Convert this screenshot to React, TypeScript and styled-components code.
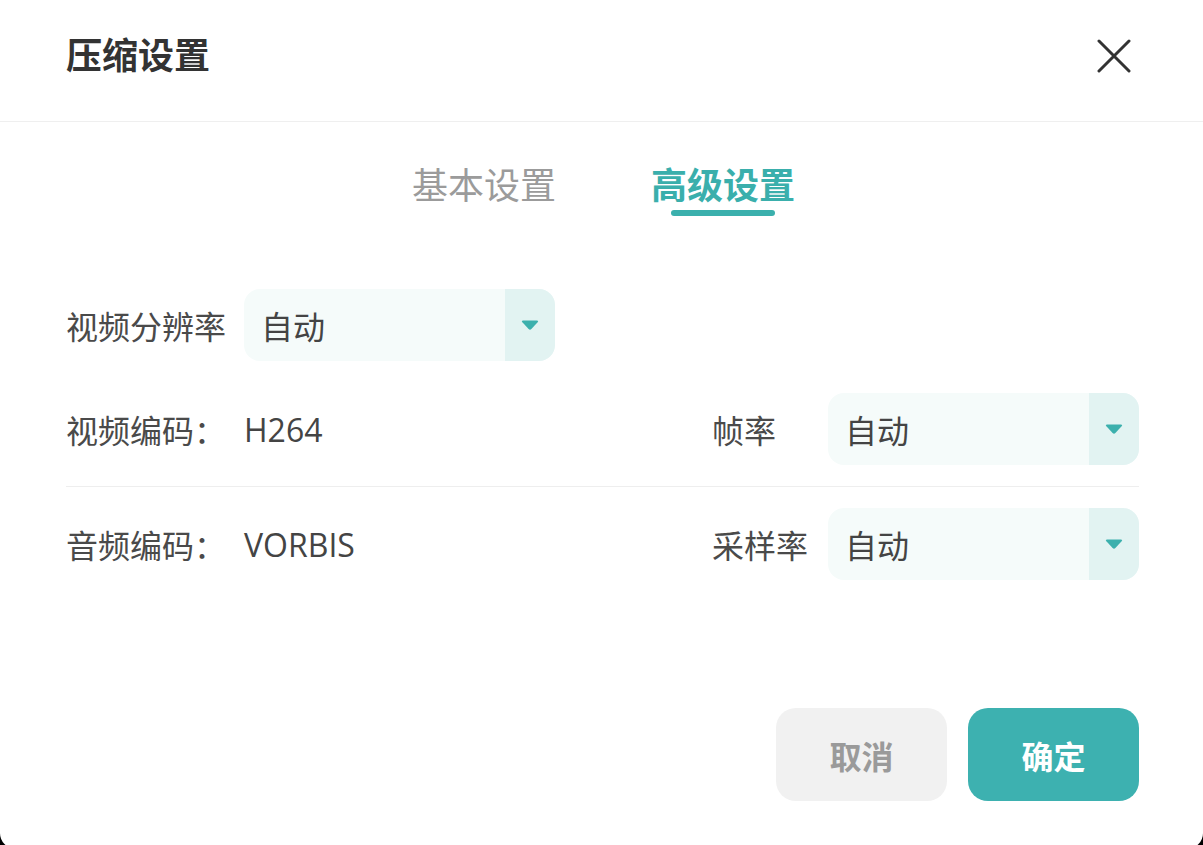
import React, { useState } from "react";
import styled, { createGlobalStyle } from "styled-components";

const Global = createGlobalStyle`
  html, body { margin: 0; padding: 0; background: #000; }
  body { font-family: "Noto Sans", "Noto Sans CJK SC", sans-serif; }
  #root { width: 1203px; height: 845px; overflow: hidden; }
`;

const Dialog = styled.div`
  width: 1203px;
  height: 849px;
  background: #fff;
  border-radius: 0 0 16px 16px;
  display: flex;
  flex-direction: column;
  box-sizing: border-box;
`;

const Header = styled.div`
  height: 122px;
  box-sizing: border-box;
  border-bottom: 1px solid #efefef;
  display: flex;
  align-items: center;
  justify-content: space-between;
  padding: 0 72px 9px 66px;
`;

const Title = styled.h1`
  margin: 0;
  font-size: 36px;
  line-height: 44px;
  font-weight: 700;
  color: #333;
`;

const CloseButton = styled.button`
  border: 0;
  padding: 0;
  background: transparent;
  width: 34px;
  height: 34px;
  display: flex;
  cursor: pointer;
`;

const Tabs = styled.div`
  display: flex;
  justify-content: center;
  gap: 95px;
  margin-top: 42px;
  padding-left: 4px;
`;

const Tab = styled.div<{ $active?: boolean }>`
  display: flex;
  flex-direction: column;
  align-items: center;
  font-size: 36px;
  line-height: 44px;
  font-weight: ${(p) => (p.$active ? 700 : 400)};
  color: ${(p) => (p.$active ? "#3aafac" : "#9b9b9b")};
  cursor: pointer;
`;

const Underline = styled.span<{ $active?: boolean }>`
  display: block;
  width: 104px;
  height: 6px;
  margin-top: 2px;
  border-radius: 3px;
  background: ${(p) => (p.$active ? "#3bb0ad" : "transparent")};
`;

const Form = styled.div`
  display: flex;
  flex-direction: column;
  margin-top: 73px;
  padding: 0 64px 0 66px;
`;

const Row = styled.div<{ $gap?: number }>`
  display: flex;
  align-items: center;
  height: 72px;
  margin-top: ${(p) => p.$gap ?? 0}px;
`;

const Label = styled.span<{ $width: number }>`
  width: ${(p) => p.$width}px;
  flex: none;
  font-size: 32px;
  color: #4a4a4a;
  white-space: nowrap;
`;

const Value = styled.span`
  font-family: "Open Sans", "Noto Sans CJK SC", sans-serif;
  font-size: 32px;
  color: #444;
`;

const RightGroup = styled.div`
  margin-left: auto;
  display: flex;
  align-items: center;
`;

const Divider = styled.div`
  height: 1px;
  background: #eeeeee;
  margin-top: 21px;
`;

const Select = styled.div`
  width: 311px;
  height: 72px;
  border-radius: 16px;
  overflow: hidden;
  background: #f5fbfa;
  display: flex;
  align-items: center;
  cursor: pointer;
`;

const SelectText = styled.span`
  flex: 1;
  padding-left: 17px;
  font-size: 32px;
  color: #444;
`;

const ArrowBox = styled.span`
  width: 50px;
  height: 100%;
  background: #e2f3f2;
  display: flex;
  align-items: center;
  justify-content: center;
`;

const Footer = styled.div`
  display: flex;
  justify-content: flex-end;
  gap: 21px;
  margin-top: 128px;
  padding-right: 64px;
`;

const Button = styled.button<{ $primary?: boolean }>`
  width: 171px;
  height: 93px;
  border: 0;
  border-radius: 20px;
  font-family: inherit;
  font-size: 32px;
  font-weight: 700;
  background: ${(p) => (p.$primary ? "#3db1b0" : "#f1f1f1")};
  color: ${(p) => (p.$primary ? "#fff" : "#9a9a9a")};
  cursor: pointer;
`;

const Caret = () => (
  <svg width="20" height="12" viewBox="0 0 20 12">
    <path d="M3 1.5 H17 Q19 1.5 17.6 3.2 L11.4 10 Q10 11.4 8.6 10 L2.4 3.2 Q1 1.5 3 1.5 Z" fill="#3cb0ad" />
  </svg>
);

const Dropdown = ({ value }: { value: string }) => (
  <Select>
    <SelectText>{value}</SelectText>
    <ArrowBox>
      <Caret />
    </ArrowBox>
  </Select>
);

export default function App() {
  const [tab, setTab] = useState(1);
  return (
    <>
      <Global />
      <Dialog>
        <Header>
          <Title>压缩设置</Title>
          <CloseButton aria-label="关闭">
            <svg width="34" height="34" viewBox="0 0 34 34">
              <path d="M2 2 L32 32 M32 2 L2 32" stroke="#333" strokeWidth="3" strokeLinecap="round" />
            </svg>
          </CloseButton>
        </Header>
        <Tabs>
          {["基本设置", "高级设置"].map((t, i) => (
            <Tab key={t} $active={tab === i} onClick={() => setTab(i)}>
              {t}
              <Underline $active={tab === i} />
            </Tab>
          ))}
        </Tabs>
        <Form>
          <Row>
            <Label $width={178}>视频分辨率</Label>
            <Dropdown value="自动" />
          </Row>
          <Row $gap={32}>
            <Label $width={178}>视频编码：</Label>
            <Value>H264</Value>
            <RightGroup>
              <Label $width={116}>帧率</Label>
              <Dropdown value="自动" />
            </RightGroup>
          </Row>
          <Divider />
          <Row $gap={21}>
            <Label $width={178}>音频编码：</Label>
            <Value>VORBIS</Value>
            <RightGroup>
              <Label $width={116}>采样率</Label>
              <Dropdown value="自动" />
            </RightGroup>
          </Row>
        </Form>
        <Footer>
          <Button>取消</Button>
          <Button $primary>确定</Button>
        </Footer>
      </Dialog>
    </>
  );
}
